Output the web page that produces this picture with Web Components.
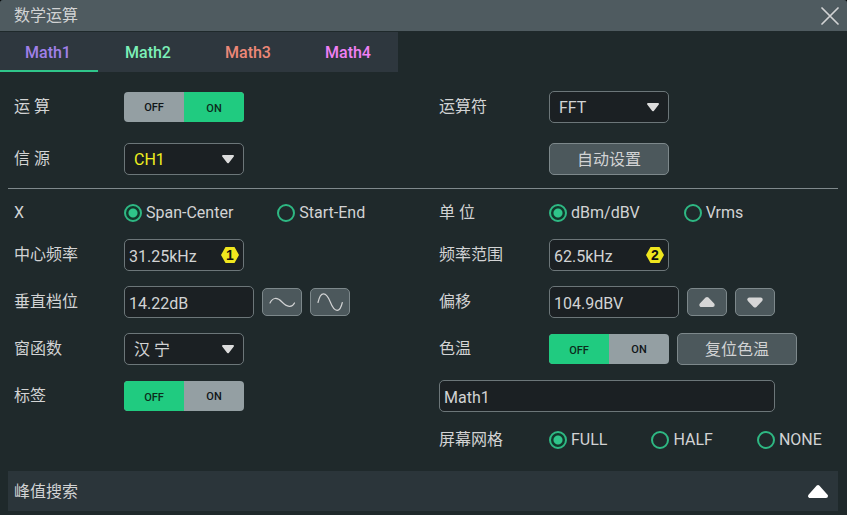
<!DOCTYPE html>
<html lang="zh-CN">
<head>
<meta charset="utf-8">
<title>数学运算</title>
<style>
  html { background: #000; }
  body {
    margin: 0;
    font: 16px/20px Roboto, "Noto Sans CJK SC", sans-serif;
    color: #d2d3d4;
    --green: #20cb80;
    --field: #1b2023;
    --line: #6c7679;
    --panel: #1f292b;
  }
</style>
</head>
<body>
<math-dialog heading="数学运算">
  <math-tabs slot="tabs"></math-tabs>
  <form-section loose>
    <switch-row label="运 算" on></switch-row>
    <select-row label="运算符" options="FFT"></select-row>
    <select-row label="信 源" options="CH1" style="--value:#f0f01e"></select-row>
    <action-row><push-button>自动设置</push-button></action-row>
  </form-section>
  <form-section ruled>
    <choice-row label="X" options="Span-Center,Start-End"></choice-row>
    <choice-row label="单 位" options="dBm/dBV,Vrms"></choice-row>
    <text-row label="中心频率" value="31.25kHz" badge="1"></text-row>
    <text-row label="频率范围" value="62.5kHz" badge="2"></text-row>
    <text-row label="垂直档位" value="14.22dB" size="mid">
      <icon-button icon="low" name="减小"></icon-button>
      <icon-button icon="high" name="增大"></icon-button>
    </text-row>
    <text-row label="偏移" value="104.9dBV" size="mid">
      <icon-button icon="up" name="上移"></icon-button>
      <icon-button icon="down" name="下移"></icon-button>
    </text-row>
    <select-row label="窗函数" options="汉 宁"></select-row>
    <switch-row label="色温"><push-button>复位色温</push-button></switch-row>
    <switch-row label="标签"></switch-row>
    <text-row name="标签文本" value="Math1" size="wide"></text-row>
    <choice-row class="right" label="屏幕网格" options="FULL,HALF,NONE"></choice-row>
  </form-section>
  <expand-bar slot="footer">峰值搜索</expand-bar>
</math-dialog>

<script>
const define = (name, cls) => customElements.define(name, cls);

class Base extends HTMLElement {
  connectedCallback() {
    if (this.shadowRoot) return;
    this.attachShadow({ mode: 'open' }).innerHTML =
      `<style>*{box-sizing:border-box}button,input,select{font:inherit;color:inherit;margin:0}${this.css()}</style>${this.html()}`;
    this.ready();
  }
  attr(n) { return this.getAttribute(n) || ''; }
  ready() {}
}

define('math-dialog', class extends Base {
  css() { return `
    :host{display:flex;flex-direction:column;min-height:100vh;background:var(--panel);border-radius:3px 3px 0 0}
    header{display:flex;align-items:center;justify-content:space-between;height:31px;padding:0 8px 0 14px;
      background:#4f5b60;border-radius:3px 3px 0 0;margin-bottom:1px}
    h1{margin:0;font-size:16px;font-weight:400}
    button{display:flex;padding:0;border:0;background:none}`; }
  html() { return `<header><h1>${this.attr('heading')}</h1>
    <button aria-label="关闭"><svg width="18" height="18" viewBox="0 0 18 18"><path d="M1 1L17 17M17 1L1 17" stroke="#d2d3d4" stroke-width="1.7" stroke-linecap="round"/></svg></button></header>
    <slot name="tabs"></slot><slot></slot><slot name="footer"></slot>`; }
});

define('math-tabs', class extends Base {
  css() { return `
    :host{display:flex}
    div{display:flex;gap:2px;background:#2e373e}
    button{width:98px;height:40px;padding:2px 2px 0 0;border:0;border-top:2px solid transparent;border-bottom:2px solid transparent;background:none;font-weight:500;color:var(--c)}
    [aria-selected=true]{border-bottom-color:#2fc58a}`; }
  html() {
    const colors = ['#a080e8', '#7cf0b8', '#ec8878', '#f080f4'];
    return `<div role="tablist">${colors.map((c, i) =>
      `<button role="tab" aria-selected="${i === 0}" style="--c:${c}">Math${i + 1}</button>`).join('')}</div>`;
  }
  ready() {
    const tabs = [...this.shadowRoot.querySelectorAll('button')];
    tabs.forEach(t => t.onclick = () => tabs.forEach(o => o.setAttribute('aria-selected', o === t)));
  }
});

define('form-section', class extends Base {
  css() { return `
    :host{display:block}
    div{display:grid;grid-template-columns:1fr 1fr;gap:15px 17px;padding:11px 0 20px 14px}
    :host([loose]) div{row-gap:20px;padding:19px 0 13px 14px}
    hr{margin:0 9px 0 8px;border:0;border-top:1px solid #7f898c}
    ::slotted(.right){grid-column:2}`; }
  html() { return `${this.hasAttribute('ruled') ? '<hr>' : ''}<div><slot></slot></div>`; }
});

class Row extends Base {
  css() { return `
    :host{display:flex;align-items:center;min-width:0;min-height:32px}
    .label{flex:0 0 110px}
    .body{display:flex;align-items:center;gap:8px}
    ${this.rowCss()}`; }
  html() {
    const label = this.attr('label');
    return `${label ? `<label class="label" for="control" id="label">${label}</label>` : ''}
      <div class="body">${this.control()}<slot></slot></div>`;
  }
  rowCss() { return ''; }
}

define('action-row', class extends Row {
  rowCss() { return ':host{padding-left:110px}'; }
  control() { return ''; }
});

define('switch-row', class extends Row {
  rowCss() { return `
    button{display:flex;width:120px;height:30px;padding:0;border:0;border-radius:4px;overflow:hidden;
      background:#949fa3;color:#101618;font-size:11px;font-weight:500;line-height:30px}
    span{flex:1;height:30px;padding-top:1px}
    [aria-checked=false] span:first-child,[aria-checked=true] span:last-child{background:var(--green);color:#0c2c1c;padding-top:2px}`; }
  control() { return `<button id="control" role="switch" aria-checked="${this.hasAttribute('on')}" aria-labelledby="label"><span>OFF</span><span>ON</span></button>`; }
  ready() {
    const b = this.shadowRoot.querySelector('button');
    b.onclick = () => b.setAttribute('aria-checked', b.getAttribute('aria-checked') !== 'true');
  }
});

define('select-row', class extends Row {
  rowCss() { return `
    .box{position:relative;display:flex}
    select{appearance:none;width:120px;height:32px;padding:2px 24px 0 9px;border:1px solid var(--line);border-radius:5px;
      background:var(--field);color:var(--value,inherit)}
    svg{position:absolute;right:9px;top:12px;pointer-events:none}`; }
  control() { return `<div class="box"><select id="control">${this.attr('options').split(',').map(o => `<option>${o}</option>`).join('')}</select>
    <svg width="14" height="9" viewBox="0 0 14 9"><path d="M2 1H12L7 7.3Z" fill="#dcdcdc" stroke="#dcdcdc" stroke-width="2" stroke-linejoin="round"/></svg></div>`; }
});

define('text-row', class extends Row {
  rowCss() { return `
    .box{position:relative;display:flex}
    input{width:120px;height:32px;padding:2px 4px 0;border:1px solid var(--line);border-radius:5px;background:var(--field)}
    :host([size=mid]) input{width:130px}
    :host([size=wide]) input{width:336px}
    .badge{position:absolute;right:5px;top:8px;width:18px;height:16px;background:#f0e61e;color:#101010;
      clip-path:polygon(25% 0,75% 0,100% 50%,75% 100%,25% 100%,0 50%);
      font:700 14px/16px "Liberation Sans",sans-serif;text-align:center}`; }
  control() {
    const badge = this.attr('badge'), name = this.attr('name');
    return `<div class="box"><input id="control" type="text" value="${this.attr('value')}"${name ? ` aria-label="${name}"` : ''}>
      ${badge ? `<span class="badge">${badge}</span>` : ''}</div>`;
  }
});

define('choice-row', class extends Row {
  rowCss() { return `
    :host{box-sizing:border-box;min-height:24px;padding-top:2px}
    .choices{display:flex;gap:44px}
    .choices label{display:flex;align-items:center;gap:4px;white-space:nowrap}
    input{appearance:none;width:18px;height:18px;border:2px solid #2eb883;border-radius:50%}
    input:checked{background:radial-gradient(circle,#2fc58a 4px,#12382c 5px)}`; }
  html() {
    return `<span class="label" id="label">${this.attr('label')}</span>
      <div class="choices" role="radiogroup" aria-labelledby="label">${this.attr('options').split(',').map((o, i) =>
        `<label><input type="radio" name="choice"${i ? '' : ' checked'}><span>${o}</span></label>`).join('')}</div>`;
  }
});

define('push-button', class extends Base {
  css() { return `
    :host{display:flex}
    button{width:120px;height:32px;padding:2px 0 0;border:1px solid #7d888b;border-radius:5px;background:#4c585c}`; }
  html() { return '<button><slot></slot></button>'; }
});

const line = 'fill="none" stroke="#d2d3d4" stroke-width="1.2" stroke-linecap="round"';
const solid = 'fill="#d6d6d6" stroke="#d6d6d6" stroke-width="4" stroke-linejoin="round"';
const icons = {
  low: `<path ${line} d="M2 10C4.500 4.500 9 3.800 14 9S24 15 26.500 10"/>`,
  high: `<path ${line} d="M2 9.500C4.500 -2 10 -2 14.300 9S24 20 26.300 9.500"/>`,
  up: `<path ${solid} d="M8.300 12H19.700L14 6Z"/>`,
  down: `<path ${solid} d="M8.300 6.500H19.700L14 12.500Z"/>`
};
define('icon-button', class extends Base {
  css() { return `
    :host{display:flex}
    button{display:flex;align-items:center;justify-content:center;width:40px;height:28px;padding:0;
      border:1px solid #7d888b;border-radius:5px;background:#4c585c}`; }
  html() { return `<button aria-label="${this.attr('name')}"><svg width="28" height="18" viewBox="0 0 28 18">${icons[this.attr('icon')]}</svg></button>`; }
});

define('expand-bar', class extends Base {
  css() { return `
    :host{display:block;margin:0 9px 4px 8px}
    button{display:flex;align-items:center;justify-content:space-between;width:100%;height:40px;padding:0 9px 0 6px;border:0;background:#2b353a}
    span{padding-top:2px}`; }
  html() { return `<button aria-expanded="false"><span><slot></slot></span>
    <svg width="22" height="16" viewBox="0 0 22 16"><path d="M3 13H19L11 4Z" fill="#fff" stroke="#fff" stroke-width="4" stroke-linejoin="round"/></svg></button>`; }
});
</script>
</body>
</html>
